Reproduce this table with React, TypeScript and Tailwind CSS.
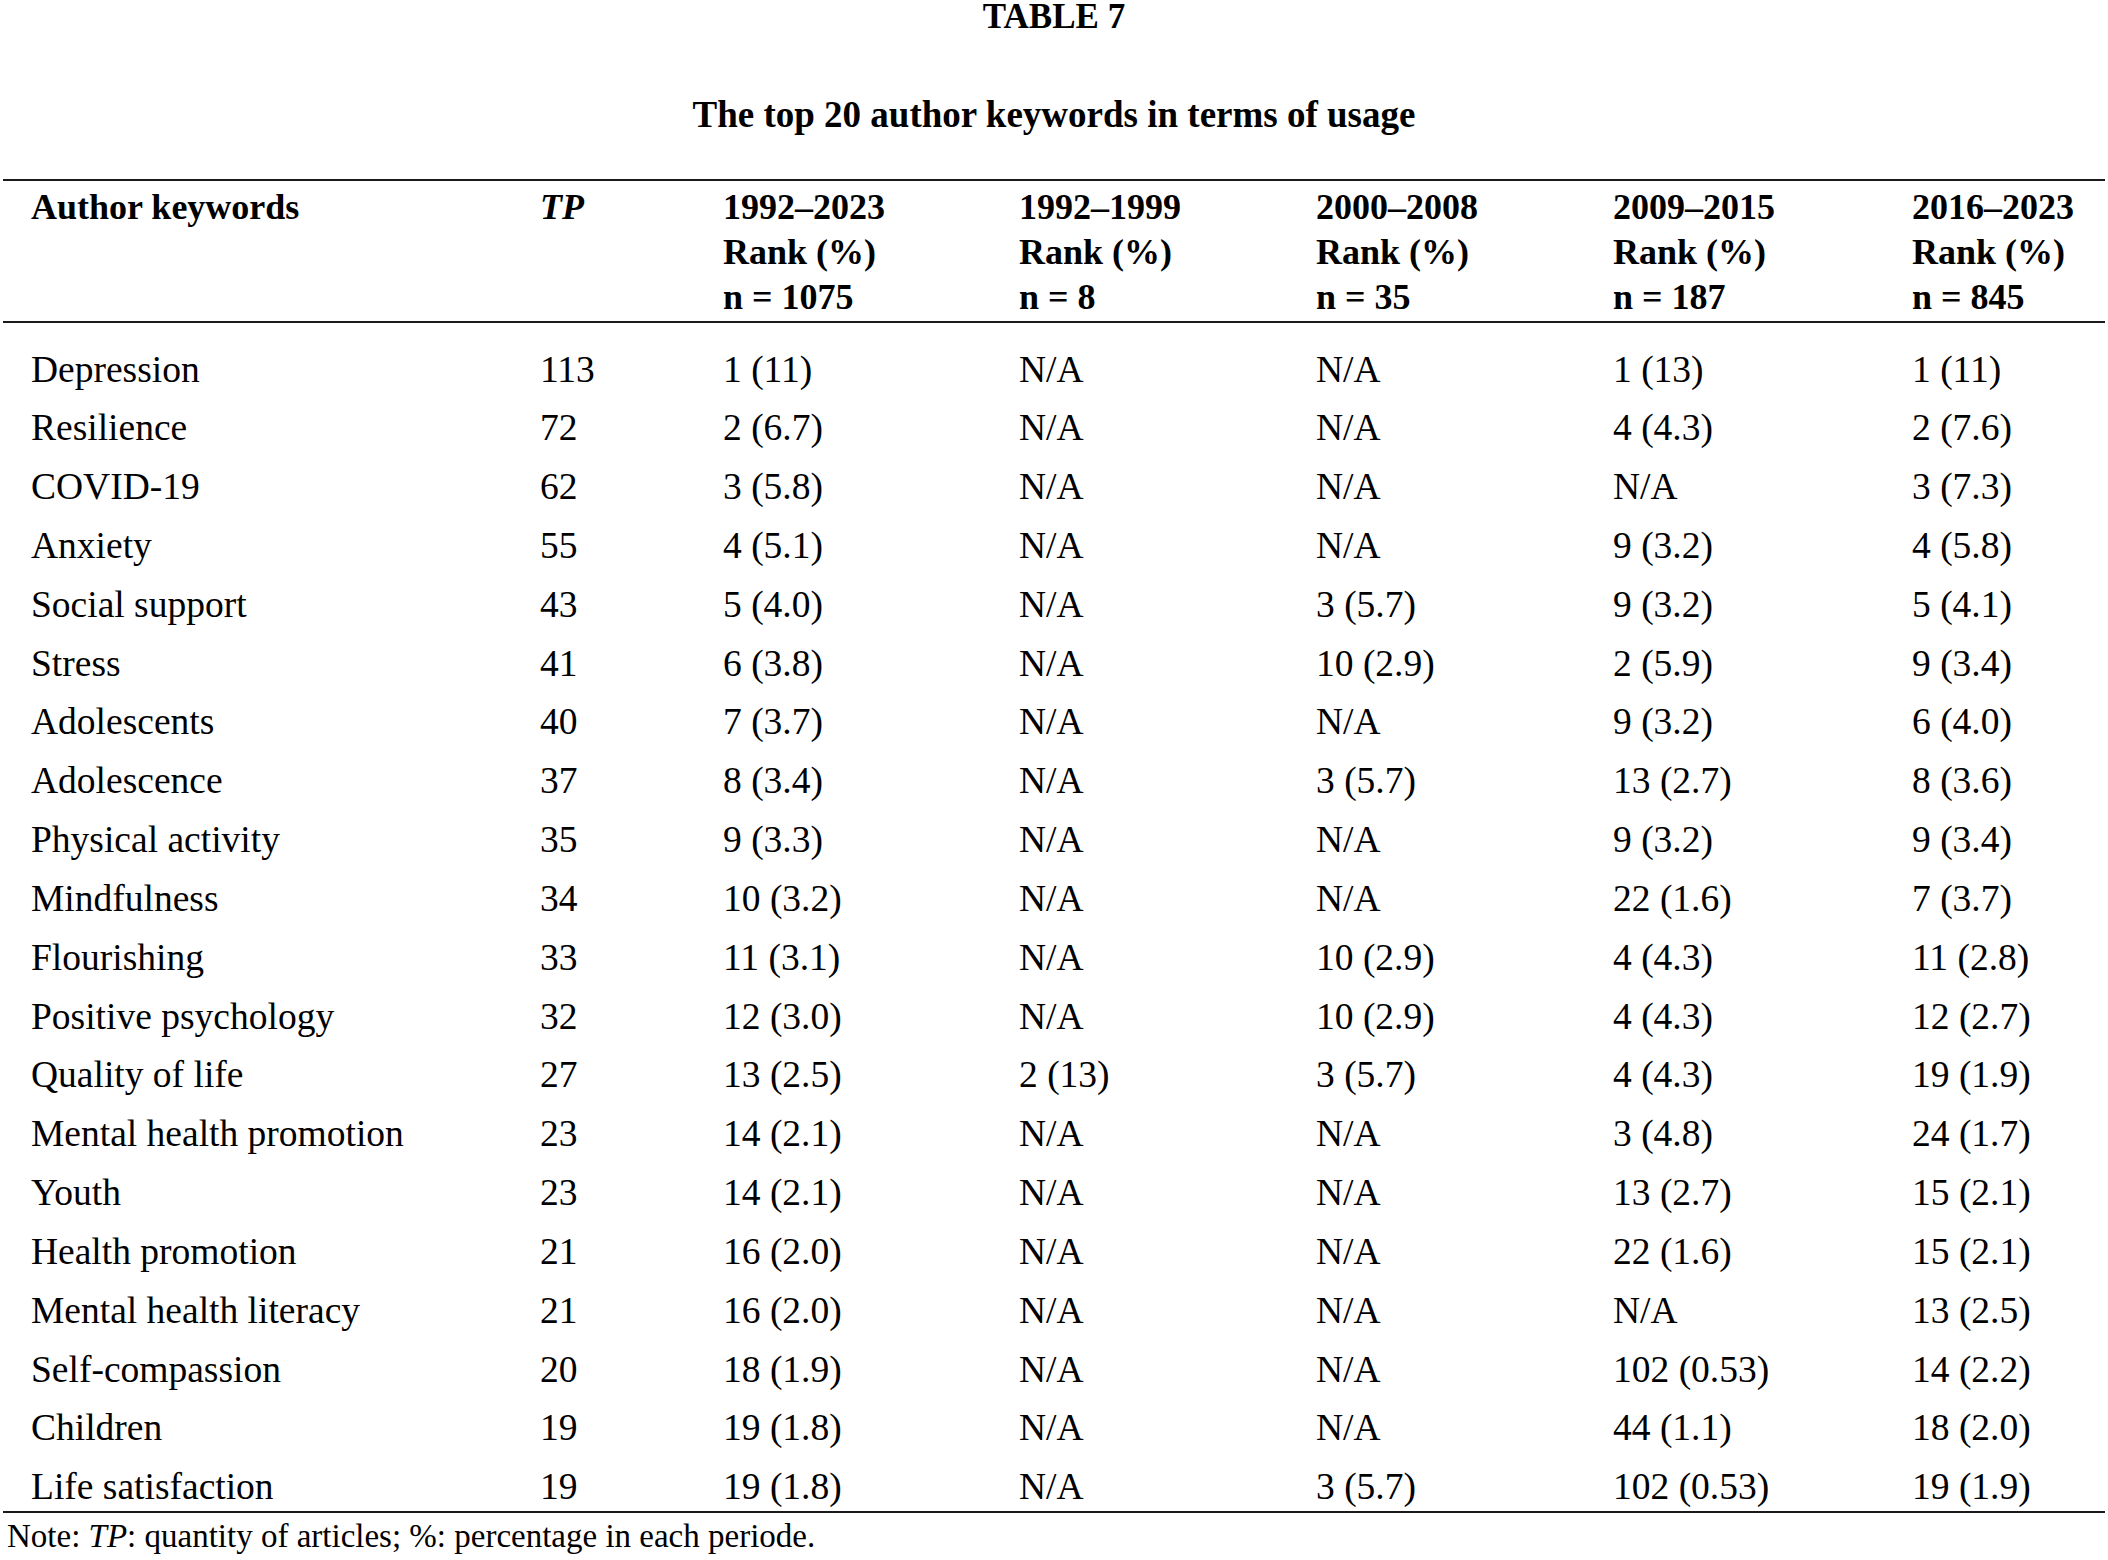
const rows: [string, string, string, string, string, string, string][] = [
  ["Depression", "113", "1 (11)", "N/A", "N/A", "1 (13)", "1 (11)"],
  ["Resilience", "72", "2 (6.7)", "N/A", "N/A", "4 (4.3)", "2 (7.6)"],
  ["COVID-19", "62", "3 (5.8)", "N/A", "N/A", "N/A", "3 (7.3)"],
  ["Anxiety", "55", "4 (5.1)", "N/A", "N/A", "9 (3.2)", "4 (5.8)"],
  ["Social support", "43", "5 (4.0)", "N/A", "3 (5.7)", "9 (3.2)", "5 (4.1)"],
  ["Stress", "41", "6 (3.8)", "N/A", "10 (2.9)", "2 (5.9)", "9 (3.4)"],
  ["Adolescents", "40", "7 (3.7)", "N/A", "N/A", "9 (3.2)", "6 (4.0)"],
  ["Adolescence", "37", "8 (3.4)", "N/A", "3 (5.7)", "13 (2.7)", "8 (3.6)"],
  ["Physical activity", "35", "9 (3.3)", "N/A", "N/A", "9 (3.2)", "9 (3.4)"],
  ["Mindfulness", "34", "10 (3.2)", "N/A", "N/A", "22 (1.6)", "7 (3.7)"],
  ["Flourishing", "33", "11 (3.1)", "N/A", "10 (2.9)", "4 (4.3)", "11 (2.8)"],
  ["Positive psychology", "32", "12 (3.0)", "N/A", "10 (2.9)", "4 (4.3)", "12 (2.7)"],
  ["Quality of life", "27", "13 (2.5)", "2 (13)", "3 (5.7)", "4 (4.3)", "19 (1.9)"],
  ["Mental health promotion", "23", "14 (2.1)", "N/A", "N/A", "3 (4.8)", "24 (1.7)"],
  ["Youth", "23", "14 (2.1)", "N/A", "N/A", "13 (2.7)", "15 (2.1)"],
  ["Health promotion", "21", "16 (2.0)", "N/A", "N/A", "22 (1.6)", "15 (2.1)"],
  ["Mental health literacy", "21", "16 (2.0)", "N/A", "N/A", "N/A", "13 (2.5)"],
  ["Self-compassion", "20", "18 (1.9)", "N/A", "N/A", "102 (0.53)", "14 (2.2)"],
  ["Children", "19", "19 (1.8)", "N/A", "N/A", "44 (1.1)", "18 (2.0)"],
  ["Life satisfaction", "19", "19 (1.8)", "N/A", "3 (5.7)", "102 (0.53)", "19 (1.9)"],
]

const periods = [
  ["1992–2023", "n = 1075"],
  ["1992–1999", "n = 8"],
  ["2000–2008", "n = 35"],
  ["2009–2015", "n = 187"],
  ["2016–2023", "n = 845"],
]

const cols = "grid grid-cols-[509px_183px_296px_297px_297px_299px_1fr] pl-[31px]"

export default function App() {
  return (
    <div className="min-h-screen w-[2108px] bg-white text-black font-['Liberation_Serif','Times_New_Roman',serif]">
      {/* caption */}
      <div className="pt-[1px] text-center text-[35px] font-bold leading-[32px]">TABLE 7</div>
      <div className="mt-[62px] text-center text-[37px] font-bold leading-[40px]">
        The top 20 author keywords in terms of usage
      </div>

      <div className="mx-[3px] mt-[44px] border-t-2 border-[#1a1a1a]" />

      {/* header */}
      <div className={`${cols} pt-[4px] pb-[1px] text-[36px] font-bold leading-[45px]`}>
        <div>Author keywords</div>
        <div className="italic">TP</div>
        {periods.map(([years, n]) => (
          <div key={years} className="flex flex-col">
            <span>{years}</span>
            <span>Rank (%)</span>
            <span>{n}</span>
          </div>
        ))}
        <div />
      </div>

      <div className="mx-[3px] border-t-2 border-[#1a1a1a]" />

      {/* body */}
      <div className="flex flex-col gap-[14.84px] pt-[24.5px] text-[37.5px] leading-[44px]">
        {rows.map((r) => (
          <div key={r[0]} className={cols}>
            {r.map((cell, i) => (
              <div key={i} className="whitespace-nowrap">
                {cell}
              </div>
            ))}
            <div />
          </div>
        ))}
      </div>

      <div className="mx-[3px] mt-[1.5px] border-t-2 border-[#1a1a1a]" />

      <div className="mt-[3px] pl-[7px] text-[33px] leading-[40px]">
        Note: <span className="italic">TP</span>: quantity of articles; %: percentage in each periode.
      </div>
    </div>
  )
}
